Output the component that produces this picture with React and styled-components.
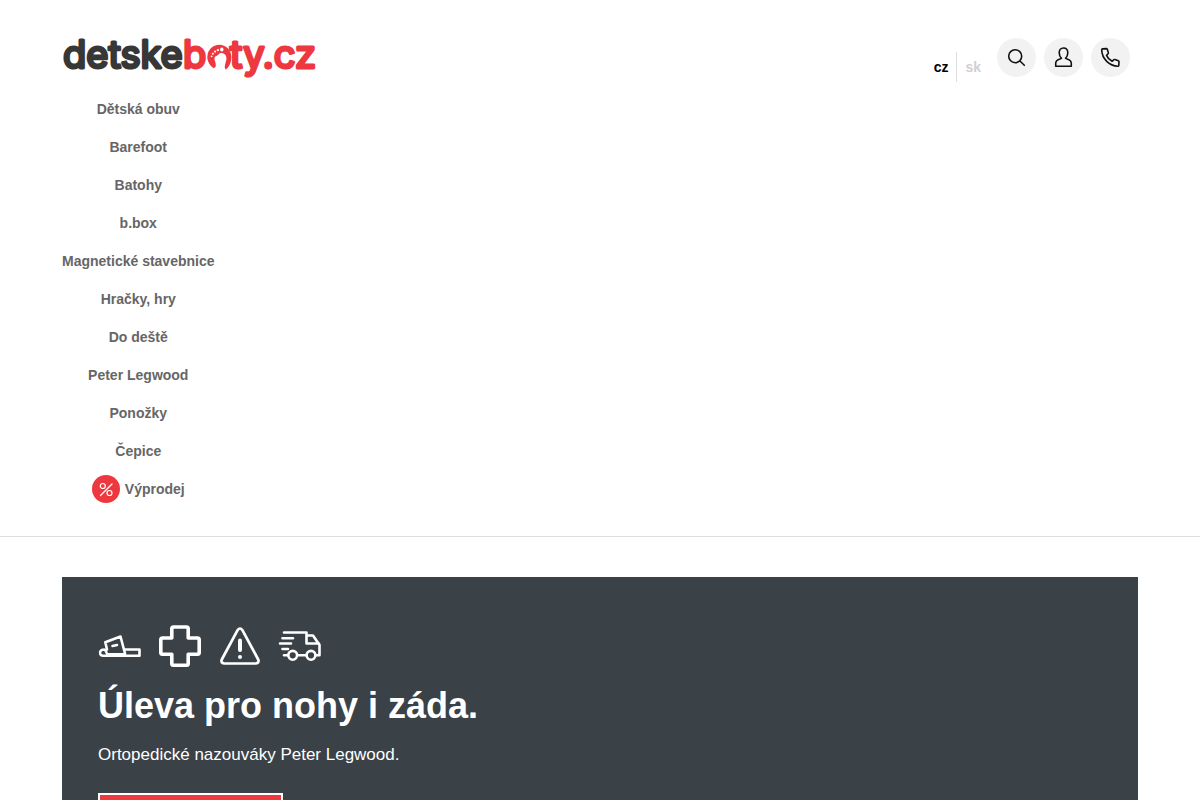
import React from "react";
import styled, { createGlobalStyle } from "styled-components";

const GlobalStyle = createGlobalStyle`
  * {
    box-sizing: border-box;
  }
  body {
    margin: 0;
    background: #fff;
    color: #000;
    font-family: "Liberation Sans", Arial, sans-serif;
    font-size: 14px;
  }
`;

const Header = styled.header`
  padding: 38px 62px 28px;
  border-bottom: 1px solid #ddd;
`;

const TopBar = styled.div`
  display: flex;
  justify-content: space-between;
  align-items: flex-start;
  height: 52px;
`;

const Logo = styled.a`
  display: block;
`;

const LogoDrawing = styled.svg`
  display: block;
  width: 252px;
  height: 40px;
  overflow: visible;
  color: #373737;
  text {
    fill: currentColor;
    stroke: currentColor;
    stroke-width: 3px;
    stroke-linejoin: round;
    font-family: Inter, sans-serif;
    font-size: 38px;
    font-weight: 400;
  }
`;

const LogoAccent = styled.g`
  color: #ee383f;
`;

const Tools = styled.div`
  display: flex;
  align-items: flex-start;
  gap: 8px;
  padding-right: 8px;
`;

const Languages = styled.div`
  display: flex;
  margin-top: 14px;
  margin-right: 8px;
`;

const Language = styled.a`
  padding-left: ${({ $active }) => ($active ? "0" : "8px")};
  padding-right: ${({ $active }) => ($active ? "8px" : "0")};
  border-right: ${({ $active }) => ($active ? "1px solid #ddd" : "none")};
  color: ${({ $active }) => ($active ? "#000" : "#d0d0d0")};
  font-weight: bold;
  line-height: 30px;
  text-decoration: none;
`;

const RoundButton = styled.button`
  display: flex;
  align-items: center;
  justify-content: center;
  width: 39px;
  height: 39px;
  padding: 0;
  border: none;
  border-radius: 50%;
  background: #f2f2f2;
  color: #111;
  cursor: pointer;
`;

const ToolIcon = styled.svg`
  width: 21px;
  height: 21px;
  fill: none;
  stroke: currentColor;
  stroke-width: 1.6;
  stroke-linecap: round;
  stroke-linejoin: round;
`;

const Nav = styled.nav`
  display: flex;
  flex-direction: column;
  align-items: center;
  width: max-content;
`;

const NavLink = styled.a`
  display: flex;
  align-items: center;
  gap: 5px;
  height: 38px;
  color: #666;
  font-weight: bold;
  text-decoration: none;
  &:hover {
    color: #ee383f;
  }
`;

const SaleBadge = styled.svg`
  width: 28px;
  height: 28px;
`;

const Main = styled.main`
  padding: 40px 62px;
`;

const Hero = styled.section`
  padding: 47px 36px 48px;
  background: #3a4147;
  color: #fff;
`;

const HeroIcons = styled.div`
  display: flex;
  gap: 16px;
`;

const HeroIcon = styled.svg`
  width: 44px;
  height: 44px;
  fill: none;
  stroke: #fff;
  stroke-linecap: round;
  stroke-linejoin: round;
`;

const HeroTitle = styled.h1`
  margin: 17px 0 16px;
  font-size: 36px;
  line-height: 42px;
`;

const HeroText = styled.p`
  margin: 0 0 26px;
  font-size: 17px;
  line-height: 24px;
`;

const HeroButton = styled.a`
  display: inline-block;
  min-width: 185px;
  padding: 14px 24px;
  border: 2px solid #fff;
  background: #ee383f;
  color: #fff;
  font-weight: bold;
  text-align: center;
  text-decoration: none;
`;

const categories = [
  "Dětská obuv",
  "Barefoot",
  "Batohy",
  "b.box",
  "Magnetické stavebnice",
  "Hračky, hry",
  "Do deště",
  "Peter Legwood",
  "Ponožky",
  "Čepice",
];

const App = () => {
  return (
    <>
      <GlobalStyle />
      <Header>
        <TopBar>
          <Logo href="#" aria-label="detskeboty.cz">
            <LogoDrawing viewBox="0 0 252 40">
              <text x="1" y="30">
                detske
              </text>
              <LogoAccent>
                <text x="121" y="30">
                  b
                </text>
                {/* the footprint stands in for the letter o */}
                <path
                  d="M151 29.800C148 27.500 145.300 23.500 145.300 19A12 12.300 0 0 1 169.300 19C169.300 24 167.500 29 163.800 31.500C162.800 31 162.500 29 163 27C163.800 23.500 165 21.500 164.200 18.500C163.200 15 158.500 13.800 156.500 16.500C155.500 18 152.800 17.800 152.500 19.800C152 22 154 24.500 153.800 27.500C153.700 29 152.500 30.500 151 29.800Z"
                  fill="currentColor"
                />
                <g fill="#fff">
                  <circle cx="149.600" cy="18.300" r="0.900" />
                  <circle cx="150.900" cy="15.700" r="1" />
                  <circle cx="153.100" cy="13.600" r="1.100" />
                  <circle cx="155.900" cy="12.100" r="1.200" />
                  <ellipse cx="159.800" cy="11.500" rx="1.700" ry="2" />
                </g>
                <text x="168" y="30">
                  ty.cz
                </text>
              </LogoAccent>
            </LogoDrawing>
          </Logo>
          <Tools>
            <Languages>
              <Language href="#cz" $active>
                cz
              </Language>
              <Language href="#sk">sk</Language>
            </Languages>
            <RoundButton type="button" aria-label="Hledat">
              <ToolIcon viewBox="0 0 21 21">
                <circle cx="9.200" cy="9.200" r="6.500" />
                <path d="M14 14L18.300 18.300" />
              </ToolIcon>
            </RoundButton>
            <RoundButton type="button" aria-label="Přihlášení">
              <ToolIcon viewBox="0 0 21 21">
                <path d="M8.500 11.300C7 10 6.200 8 6.200 5.800C6.200 3 7.800 1 10.500 1C13.200 1 14.800 3 14.800 5.800C14.800 8 14 10 12.500 11.300C14 12.800 18.300 12 18.300 16.500V19.300H2.700V16.500C2.700 12 7 12.800 8.500 11.300Z" />
              </ToolIcon>
            </RoundButton>
            <RoundButton type="button" aria-label="Telefon">
              <ToolIcon viewBox="0 0 21 21">
                <path d="M2.500 1.900L6.200 1.600Q7.100 1.600 7.400 2.500L8.300 5.500Q8.500 6.400 7.900 7L6.500 8.400Q8 12 12.100 14.300L13.600 12.900Q14.200 12.300 15.100 12.600L18.300 13.700Q19.100 14 19 14.900L18.800 18.300Q18.700 19.200 17.800 19.200C9.500 19 2 12 1.700 2.900Q1.700 2 2.500 1.900Z" />
              </ToolIcon>
            </RoundButton>
          </Tools>
        </TopBar>
        <Nav>
          {categories.map((name) => (
            <NavLink href="#" key={name}>
              {name}
            </NavLink>
          ))}
          <NavLink href="#">
            <SaleBadge viewBox="0 0 28 28" aria-hidden="true">
              <circle cx="14" cy="14" r="14" fill="#ee383f" />
              <g fill="none" stroke="#fff" strokeWidth="1.200" strokeLinecap="round">
                <circle cx="10.800" cy="11" r="2.500" />
                <circle cx="17.500" cy="18" r="2.500" />
                <path d="M20 9L8.500 20.500" />
              </g>
            </SaleBadge>
            Výprodej
          </NavLink>
        </Nav>
      </Header>
      <Main>
        <Hero>
          <HeroIcons>
            <HeroIcon viewBox="0 0 44 44" strokeWidth="2.600" aria-hidden="true">
              <path d="M6 25.500C2.500 25.500 1.500 28 2.300 30.200Q3 31.700 5 31.700H41.500V25.500H27M6 25.500Q8 26 8.500 28.500Q9 30.300 11 30.300H27M9 25.500L7.300 18.300L22.500 12.500L27 29.500" />
              <path d="M14.500 22L19 21" />
            </HeroIcon>
            <HeroIcon viewBox="0 0 44 44" strokeWidth="3.600" aria-hidden="true">
              <path d="M15.500 3H28.500Q30.200 3 30.200 4.700V14H39.500Q41.200 14 41.200 15.700V28.500Q41.200 30.200 39.500 30.200H30.200V39.500Q30.200 41.200 28.500 41.200H15.500Q13.800 41.200 13.800 39.500V30.200H4.500Q2.800 30.200 2.800 28.500V15.700Q2.800 14 4.500 14H13.800V4.700Q13.800 3 15.500 3Z" />
            </HeroIcon>
            <HeroIcon viewBox="0 0 44 44" strokeWidth="2.700" aria-hidden="true">
              <path d="M19.600 6.200Q22 2.800 24.400 6.200L40.200 35.500Q41.500 39 37.800 39.500H6.200Q2.500 39 3.800 35.500Z" />
              <path d="M22 16.500V26" strokeWidth="4" />
              <circle cx="22" cy="33" r="2" fill="#fff" stroke="none" />
            </HeroIcon>
            <HeroIcon viewBox="0 0 44 44" strokeWidth="2.600" aria-hidden="true">
              <path d="M6 8.500H28.500V19.500H41M28.500 11.500H35L41.500 21V31.300H37.500M28.500 31.300H19.500M10 31.300H6" />
              <path d="M4.500 14.200H15M2 19.500H13M4.500 25H10" />
              <circle cx="14.700" cy="31.300" r="4.400" />
              <circle cx="33" cy="31.300" r="4.400" />
            </HeroIcon>
          </HeroIcons>
          <HeroTitle>Úleva pro nohy i záda.</HeroTitle>
          <HeroText>Ortopedické nazouváky Peter Legwood.</HeroText>
          <HeroButton href="#">Zobrazit nabídku</HeroButton>
        </Hero>
      </Main>
    </>
  );
};

export default App;
